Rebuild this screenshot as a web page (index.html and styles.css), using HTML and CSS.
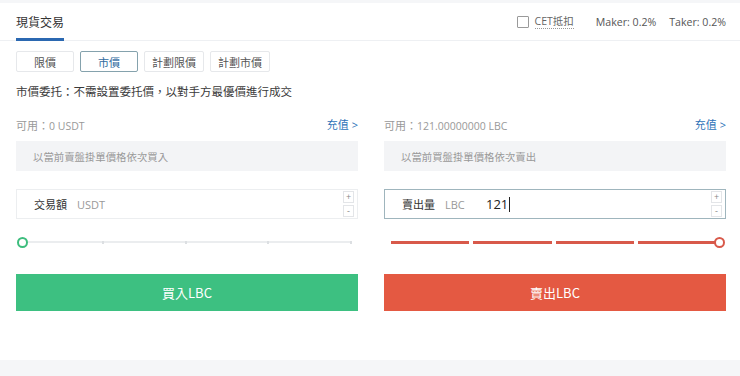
FILE: index.html
```html
<!DOCTYPE html>
<html lang="zh-Hant">
<head>
<meta charset="utf-8">
<title>現貨交易</title>
<link rel="stylesheet" href="styles.css">
</head>
<body>
<div class="panel">
  <div class="header">
    <div class="title">現貨交易</div>
    <div class="fees">
      <label class="cet"><span class="checkbox"></span><span class="cet-text">CET抵扣</span></label>
      <span class="fee">Maker: 0.2%</span>
      <span class="fee">Taker: 0.2%</span>
    </div>
  </div>
  <div class="tabs">
    <div class="tab">限價</div>
    <div class="tab active">市價</div>
    <div class="tab wide">計劃限價</div>
    <div class="tab wide">計劃市價</div>
  </div>
  <div class="desc">市價委托：不需設置委托價，以對手方最優價進行成交</div>
  <div class="cols">
    <div class="col">
      <div class="avail"><span><span class="cn">可用：</span>0 USDT</span><a class="deposit">充值 &gt;</a></div>
      <div class="hint">以當前賣盤掛單價格依次買入</div>
      <div class="field">
        <span class="label">交易額</span><span class="unit">USDT</span><span class="value"></span>
        <div class="stepper"><span class="step">+</span><span class="step">-</span></div>
      </div>
      <div class="slider">
        <div class="track"></div>
        <span class="tick t1"></span><span class="tick t2"></span><span class="tick t3"></span><span class="tick t4"></span>
        <span class="ring buy-ring"></span>
      </div>
      <div class="btn buy">買入LBC</div>
    </div>
    <div class="col">
      <div class="avail"><span><span class="cn">可用：</span>121.00000000 LBC</span><a class="deposit">充值 &gt;</a></div>
      <div class="hint">以當前買盤掛單價格依次賣出</div>
      <div class="field focus">
        <span class="label">賣出量</span><span class="unit">LBC</span><span class="value">121<span class="caret"></span></span>
        <div class="stepper"><span class="step">+</span><span class="step">-</span></div>
      </div>
      <div class="slider">
        <div class="segs"><span class="seg"></span><span class="seg"></span><span class="seg"></span><span class="seg"></span></div>
        <span class="ring sell-ring"></span>
      </div>
      <div class="btn sell">賣出LBC</div>
    </div>
  </div>
</div>
</body>
</html>
```
FILE: styles.css
```css
* { box-sizing: border-box; }
html, body { margin: 0; padding: 0; }
body {
  background: #f5f6f8;
  font-family: "Open Sans", "Noto Sans CJK TC", sans-serif;
  color: #333;
  width: 740px;
  height: 376px;
  overflow: hidden;
}
.panel {
  margin-top: 3px;
  background: #fff;
  height: 357px;
}
.header {
  height: 38px;
  border-bottom: 1px solid #eef0f3;
  display: flex;
  justify-content: space-between;
  align-items: stretch;
  padding: 0 14px 0 16px;
}
.title {
  font-family: "Noto Sans CJK TC", sans-serif;
  font-size: 12px;
  white-space: nowrap;
  color: #333;
  padding-top: 10px;
  width: 48px;
  border-bottom: 3px solid #2b68b1;
  margin-bottom: -1px;
}
.fees {
  display: flex;
  align-items: center;
  font-size: 10.6px;
  color: #555;
}
.cet { display: flex; align-items: center; margin-right: 22px; }
.checkbox {
  width: 12px; height: 12px;
  border: 1px solid #9a9a9a;
  border-radius: 1px;
  margin-right: 6px;
}
.cet-text {
  font-size: 10.5px;
  color: #666;
  border-bottom: 1px dotted #999;
  line-height: 13px;
}
.fee { margin-left: 13px; }
.fee:first-of-type { margin-left: 0; }
.tabs {
  display: flex;
  gap: 6px;
  padding: 10px 16px 0;
}
.tab {
  width: 58px;
  height: 21px;
  border: 1px solid #e6e8eb;
  border-radius: 2px;
  font-family: "Noto Sans CJK TC", sans-serif;
  font-size: 11px;
  color: #555;
  display: flex;
  align-items: center;
  justify-content: center;
}
.tab.wide { width: 60px; }
.tab.active { border-color: #85a2ad; color: #2f6aa0; }
.desc {
  font-family: "Noto Sans CJK TC", sans-serif;
  font-size: 11.5px;
  color: #3a3a3a;
  line-height: 16px;
  padding: 11px 16px 0;
}
.cols {
  display: grid;
  grid-template-columns: 342px 342px;
  column-gap: 26px;
  padding: 18px 14px 0 16px;
}
.avail {
  display: flex;
  justify-content: space-between;
  font-size: 10.5px;
  line-height: 16px;
  color: #999;
}
.cn { font-family: "Noto Sans CJK TC", sans-serif; font-size: 11px; }
.deposit { color: #2c72b8; font-size: 11px; }
.hint {
  margin-top: 7px;
  height: 30px;
  background: #f3f4f6;
  font-family: "Noto Sans CJK TC", sans-serif;
  font-size: 10.4px;
  color: #999;
  display: flex;
  align-items: center;
  padding-left: 17px;
}
.field {
  margin-top: 18px;
  height: 30px;
  border: 1px solid #eceef0;
  display: flex;
  align-items: center;
  padding-left: 17px;
  position: relative;
}
.field.focus { border-color: #9fb5bd; }
.label {
  font-family: "Noto Sans CJK TC", sans-serif;
  font-size: 11px;
  color: #333;
  margin-right: 10px;
}
.unit { font-size: 11px; color: #999; }
.focus .unit { width: 41px; }
.value { font-size: 13px; color: #222; display: flex; align-items: center; }
.caret { display: inline-block; width: 1px; height: 15px; background: #222; margin-left: 1px; }
.stepper {
  margin-left: auto;
  margin-right: 3px;
  display: flex;
  flex-direction: column;
  gap: 2px;
}
.step {
  width: 11px;
  height: 12px;
  border: 1px solid #e3e5e8;
  font-size: 9px;
  line-height: 10px;
  color: #888;
  text-align: center;
  background: #fff;
}
.slider {
  position: relative;
  height: 22px;
  margin-top: 12px;
  padding: 0 6px;
  display: flex;
  align-items: center;
}
.track { height: 2px; background: #ebedef; flex: 1; }
.tick {
  position: absolute;
  top: 10px;
  width: 2px; height: 3px;
  background: #dcdfe2;
}
.t1 { left: 86px; } .t2 { left: 169px; } .t3 { left: 251px; } .t4 { left: 334px; }
.segs { display: flex; gap: 4px; flex: 1; padding-left: 1px; padding-right: 4px; }
.seg { flex: 1; height: 3px; background: #d8594a; }
.ring {
  position: absolute;
  top: 6px;
  width: 11px; height: 11px;
  border-radius: 50%;
  background: #fff;
}
.buy-ring { left: 1px; border: 2px solid #3dbd7d; }
.sell-ring { right: 1px; border: 2px solid #d8594a; }
.btn {
  margin-top: 21px;
  height: 37px;
  color: #fff;
  font-family: "Noto Sans CJK TC", sans-serif;
  font-size: 13px;
  display: flex;
  align-items: center;
  justify-content: center;
}
.buy { background: #3dc081; }
.sell { background: #e45942; }
```
